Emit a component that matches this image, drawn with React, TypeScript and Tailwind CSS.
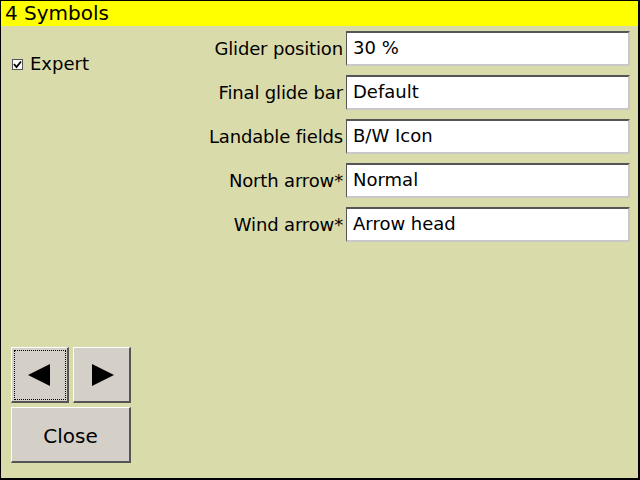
import React from 'react'

const rows = [
  { label: 'Glider position', value: '30 %' },
  { label: 'Final glide bar', value: 'Default' },
  { label: 'Landable fields', value: 'B/W Icon' },
  { label: 'North arrow*', value: 'Normal' },
  { label: 'Wind arrow*', value: 'Arrow head' },
]

const raised = 'bg-[#d4d0c8] border-t border-l border-t-white border-l-white border-b-2 border-r-2 border-b-[#555555] border-r-[#555555]'

const App = () => {
  return (
    <main className="w-[640px] h-[480px] flex flex-col bg-[#dadbab] border-t border-l border-r-2 border-b-2 border-black text-black font-['DejaVu_Sans',sans-serif]">
      <div className="h-[25px] bg-[#ffff00] px-[4px] text-[20px] leading-[25px]">4 Symbols</div>

      <div className="flex flex-1">
        <section className="w-[200px] flex flex-col justify-between pl-[10px] pt-[28px] pb-[15px]">
          <div className="flex items-center gap-[7px] pl-[1px]">
            <div className="w-[11px] h-[11px] bg-white border border-[#555555] flex items-center justify-center">
              <svg width="9" height="9" viewBox="0 0 9 9">
                <path d="M1 4 L3.5 7 L8 1.5" stroke="black" strokeWidth="1.8" fill="none" />
              </svg>
            </div>
            <span className="text-[18px] leading-[20px]">Expert</span>
          </div>

          <div className="flex flex-col gap-[4px] w-[120px]">
            <div className="flex gap-[4px]">
              <button className={`w-[58px] h-[56px] flex items-center justify-center ${raised}`}>
                <div className="w-[52px] h-[50px] border border-dotted border-black flex items-center justify-center">
                  <svg width="24" height="22" viewBox="0 0 24 22">
                    <path d="M0 11 L22 0 L22 22 Z" fill="black" />
                  </svg>
                </div>
              </button>
              <button className={`w-[58px] h-[56px] flex items-center justify-center ${raised}`}>
                <svg width="24" height="22" viewBox="0 0 24 22">
                  <path d="M2 0 L24 11 L2 22 Z" fill="black" />
                </svg>
              </button>
            </div>
            <button className={`w-[120px] h-[56px] pt-[3px] text-[20px] ${raised}`}>Close</button>
          </div>
        </section>

        <section className="flex-1 flex flex-col gap-[9px] pt-[5px] pr-[8px]">
          {rows.map((row, index) => (
            <div key={index} className="flex items-center">
              <div className="flex-1 text-right pr-[3px] text-[18px] tracking-[-0.15px]">{row.label}</div>
              <div className="w-[284px] h-[35px] bg-white border-t-2 border-l border-t-[#555555] border-l-[#555555] border-b-2 border-r-2 border-b-[#c8c8c8] border-r-[#c8c8c8] px-[6px] text-[18px] leading-[30px]">
                {row.value}
              </div>
            </div>
          ))}
        </section>
      </div>
    </main>
  )
}

export default App
